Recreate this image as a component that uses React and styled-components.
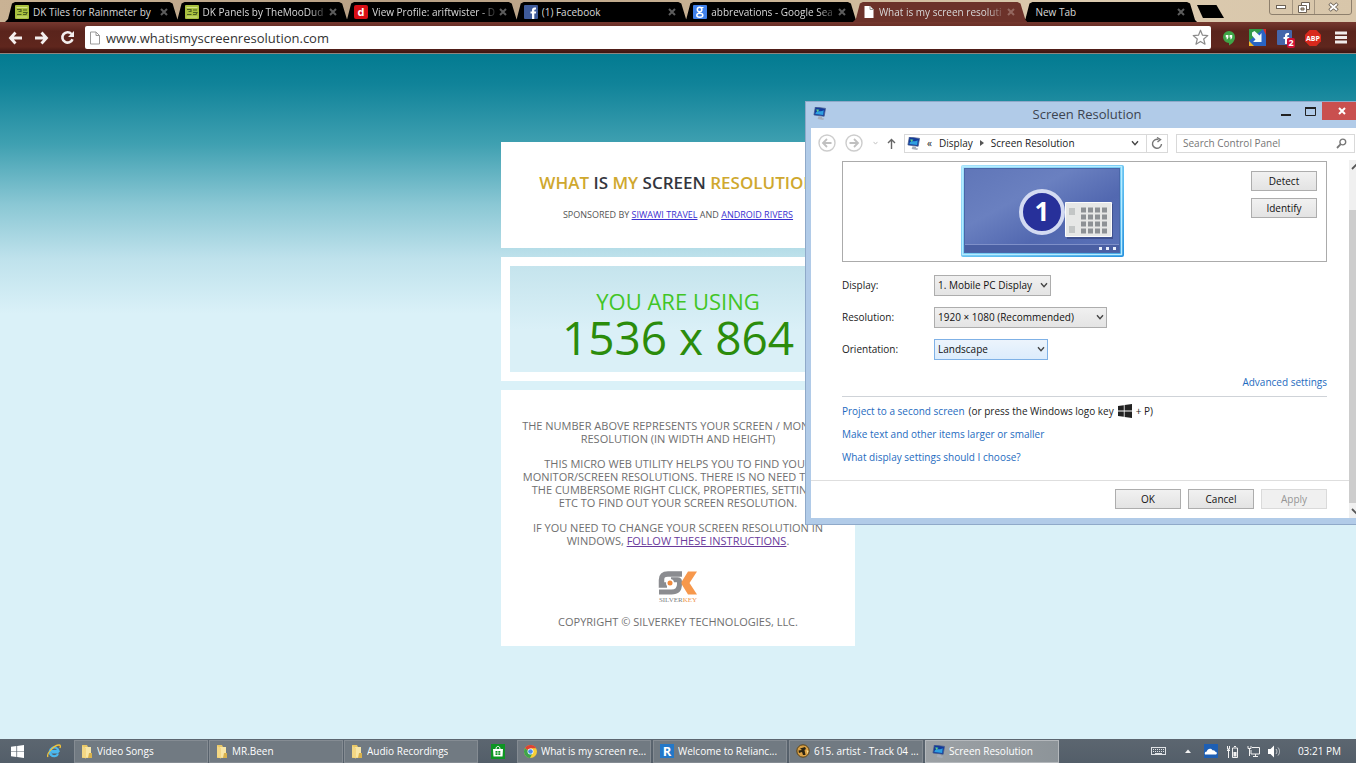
import React, { useState } from "react";
import styled, { createGlobalStyle } from "styled-components";

const uiFont = `"Open Sans", "Noto Sans", sans-serif`;
const webFont = `"Open Sans", Lato, sans-serif`;

const GlobalStyle = createGlobalStyle`
  * {
    box-sizing: border-box;
  }
  body {
    margin: 0;
    overflow: hidden;
    font-family: ${uiFont};
  }
  button, input, select {
    font-family: inherit;
    margin: 0;
  }
  svg {
    display: block;
    flex: none;
  }
`;

const Desktop = styled.div`
  position: relative;
  display: flex;
  flex-direction: column;
  height: 100vh;
  overflow: hidden;
`;

/* ---------- browser ---------- */

const TabStrip = styled.div`
  display: flex;
  height: 22px;
  padding: 2px 0 0 5px;
  background: linear-gradient(90deg, #c9b294, #b79f84 30%, #cdb798 60%, #dccbb0 80%, #d8c6aa);
`;

const TabList = styled.div`
  display: flex;
  flex: 0 1 1187px;
  min-width: 0;
`;

const Tab = styled.div`
  position: relative;
  z-index: ${({ $active }) => ($active ? 1 : 0)};
  display: flex;
  flex: 1;
  align-items: center;
  min-width: 0;
  padding: 0 4px 0 10px;

  &::before {
    content: "";
    position: absolute;
    inset: 0 -5px 0 0;
    z-index: -1;
    background: ${({ $active }) => ($active ? "#6c322a" : "#000")};
    clip-path: polygon(0 100%, 3px 85%, 7px 8%, 10px 0, calc(100% - 10px) 0, calc(100% - 7px) 8%, calc(100% - 2px) 90%, 100% 100%);
  }
`;

const TabButton = styled.button`
  display: flex;
  flex: 1;
  align-items: center;
  gap: 4px;
  min-width: 0;
  padding: 0 0 1px ${({ $plain }) => ($plain ? 3 : 0)}px;
  border: none;
  background: none;
  color: #d8d8d8;
  font-size: 10px;
  line-height: 16px;
  text-align: left;
`;

const TabText = styled.span`
  flex: 1;
  overflow: hidden;
  white-space: nowrap;
  mask-image: ${({ $fade }) => ($fade ? "linear-gradient(90deg, #000 calc(100% - 16px), rgba(0, 0, 0, 0.2))" : "none")};
`;

const CloseTab = styled.button`
  display: flex;
  width: 15px;
  padding: 0 4px;
  border: none;
  background: none;
`;

const NewTab = styled.button`
  width: 27px;
  height: 13px;
  margin: 3px 0 0 5px;
  padding: 0;
  border: none;
  background: #000;
  clip-path: polygon(0 0, 72% 0, 100% 100%, 22% 100%);
`;

const BrowserControls = styled.div`
  display: flex;
  height: 16px;
  margin: -3px 4px 0 auto;
  border: 1px solid #8d7f6c;
  border-radius: 0 0 3px 3px;
`;

const BrowserControl = styled.button`
  display: flex;
  align-items: center;
  justify-content: center;
  width: ${({ $wide }) => ($wide ? 37 : 22)}px;
  padding: 0;
  border: none;
  border-left: ${({ $first }) => ($first ? "none" : "1px solid #a39480")};
  background: none;
`;

const Toolbar = styled.div`
  display: flex;
  align-items: center;
  gap: 10px;
  height: 32px;
  padding: 0 7px;
  border-bottom: 1px solid #8f8580;
  background: linear-gradient(180deg, #75382f, #5a241c 30%, #5f261d 80%, #3c1411);
`;

const ToolButton = styled.button`
  display: flex;
  align-items: center;
  justify-content: center;
  width: 16px;
  height: 18px;
  padding: 0;
  border: none;
  background: none;
`;

const Omnibox = styled.div`
  display: flex;
  flex: 1;
  align-items: center;
  gap: 5px;
  height: 23px;
  padding: 0 3px 0 4px;
  border-radius: 2px;
  background: #fff;
`;

const UrlInput = styled.input`
  flex: 1;
  min-width: 0;
  padding: 0;
  border: none;
  outline: none;
  background: none;
  color: #333;
  font-size: 13px;
  line-height: 18px;
`;

const Extensions = styled.div`
  display: flex;
  gap: 12px;
  align-items: center;
`;

/* ---------- web page ---------- */

const Page = styled.main`
  display: flex;
  flex: 1;
  flex-direction: column;
  align-items: center;
  gap: 9px;
  min-height: 0;
  padding-top: 88px;
  background: linear-gradient(180deg, #037b91 0, #108399 30px, #3fa0b1 90px, #8ac7d4 150px, #bfe2ec 205px, #daf1f8 260px);
  font-family: ${webFont};
  text-align: center;
`;

const Card = styled.section`
  width: 26%;
  min-width: 354px;
  background: #fff;
`;

const TitleCard = styled(Card)`
  padding: 30px 0 27px;
`;

const Title = styled.h1`
  margin: 0 0 14px;
  color: #cfa82e;
  font-size: 17px;
  font-weight: 600;
  line-height: 22px;
  white-space: nowrap;

  span {
    color: #33353d;
  }
`;

const Sponsor = styled.p`
  margin: 0;
  color: #555;
  font-size: 9px;
  line-height: 13px;

  a {
    color: #3a2fd0;
  }
`;

const ResultCard = styled(Card)`
  padding: 9px;
`;

const Result = styled.div`
  padding: 22px 0 12px;
  background: linear-gradient(180deg, #c5e4ed, #daf0f7 60%);
`;

const ResultLabel = styled.div`
  color: #41c526;
  font-size: 22px;
  line-height: 27px;
`;

const ResultValue = styled.div`
  color: #2b8c0b;
  font-size: 46px;
  line-height: 45px;
`;

const InfoCard = styled(Card)`
  display: flex;
  flex-direction: column;
  align-items: center;
  gap: 12px;
  padding: 29px 0 18px;
  color: #6f6f6f;
  font-size: 11px;
  line-height: 13px;
`;

const Paragraph = styled.p`
  margin: 0;
  white-space: nowrap;

  a {
    color: #6a3a9c;
  }
`;

const LogoLink = styled.a`
  margin-top: 12px;
`;

/* ---------- screen resolution window ---------- */

const Window = styled.section`
  position: absolute;
  top: 101px;
  left: 805px;
  right: 0;
  display: flex;
  flex-direction: column;
  padding: 0 0 6px 5px;
  border: 1px solid #8fa9c9;
  border-right: none;
  background: #b1cbe8;
  color: #222;
  font-size: 10px;
`;

const TitleBar = styled.header`
  display: flex;
  align-items: flex-start;
  height: 26px;
  padding-left: 2px;
`;

const TitleIcon = styled.div`
  padding-top: 5px;
`;

const WindowTitle = styled.h2`
  flex: 1;
  margin: 0;
  padding-left: 74px;
  color: #3c4450;
  font-size: 13px;
  font-weight: 400;
  line-height: 24px;
  text-align: center;
`;

const WindowButton = styled.button`
  display: flex;
  align-items: center;
  justify-content: center;
  width: ${({ $close }) => ($close ? 34 : 24)}px;
  height: 18px;
  padding: 0;
  padding-left: ${({ $close }) => ($close ? 6 : 0)}px;
  border: none;
  background: ${({ $close }) => ($close ? "#c9504f" : "none")};
`;

const WindowBody = styled.div`
  background: #fff;
`;

const NavRow = styled.div`
  display: flex;
  align-items: center;
  height: 30px;
  margin-bottom: 2px;
  padding: 0 1px 0 6px;
`;

const NavButton = styled.button`
  display: flex;
  align-items: center;
  justify-content: center;
  width: ${({ $width }) => $width}px;
  height: 19px;
  padding: 0;
  border: none;
  background: none;
`;

const Address = styled.div`
  display: flex;
  flex: 0 0 264px;
  align-items: center;
  gap: 7px;
  height: 19px;
  margin-right: 8px;
  padding-left: 2px;
  border: 1px solid #d9d9d9;
`;

const Refresh = styled(NavButton)`
  height: 17px;
  border-left: 1px solid #d9d9d9;
`;

const AddressMenu = styled(NavButton)`
  margin-left: auto;
`;

const SearchBox = styled.label`
  display: flex;
  flex: 1;
  align-items: center;
  height: 19px;
  min-width: 0;
  padding: 0 7px 0 6px;
  border: 1px solid #d9d9d9;
`;

const SearchInput = styled.input`
  flex: 1;
  min-width: 0;
  padding: 0;
  border: none;
  outline: none;
  font-size: 10px;

  &::placeholder {
    color: #767676;
  }
`;

const ScrollArea = styled.div`
  display: flex;
`;

const Panel = styled.div`
  flex: 1;
  min-width: 0;
`;

const PanelContent = styled.div`
  padding: 1px 22px 15px 31px;
  border-bottom: 1px solid #dedede;
`;

const Preview = styled.div`
  display: flex;
  gap: 9px;
  height: 101px;
  padding: 3px 9px 3px 0;
  border: 1px solid #ababab;
`;

const Monitors = styled.div`
  display: flex;
  flex: 1;
  justify-content: center;
`;

const PreviewButtons = styled.div`
  display: flex;
  flex-direction: column;
  gap: 7px;
  padding-top: 6px;
`;

const Button = styled.button`
  width: 66px;
  height: 20px;
  padding: 0;
  border: 1px solid #adadad;
  background: linear-gradient(180deg, #f1f1f1, #e3e3e3);
  color: #111;
  font-size: 10px;
  line-height: 16px;

  &:disabled {
    border-color: #dadada;
    background: #f0f0f0;
    color: #959595;
  }
`;

const Form = styled.form`
  margin-top: 7px;
`;

const Field = styled.div`
  display: grid;
  grid-template-columns: 92px auto;
  align-items: center;
  justify-content: start;
  height: 32px;
`;

const SelectWrap = styled.div`
  display: grid;
  align-items: center;
  width: ${({ $width }) => $width}px;

  > * {
    grid-area: 1 / 1;
  }

  svg {
    justify-self: end;
    margin-right: 3px;
    pointer-events: none;
  }
`;

const Select = styled.select`
  width: 100%;
  height: 21px;
  padding: 0 12px 0 3px;
  border: 1px solid ${({ $focused }) => ($focused ? "#7fb1e6" : "#adadad")};
  border-radius: 0;
  background: ${({ $focused }) =>
    $focused ? "linear-gradient(180deg, #ecf4fc, #dcecfc)" : "linear-gradient(180deg, #f0f0f0, #e4e4e4)"};
  color: #111;
  font-size: 10px;
  appearance: none;
`;

const Advanced = styled.div`
  padding: 9px 0 6px;
  border-bottom: 1px solid #cfd3d8;
  line-height: 16px;
  text-align: right;
`;

const Link = styled.a`
  color: #1e6bc0;
  text-decoration: none;
`;

const Links = styled.div`
  display: flex;
  flex-direction: column;
  gap: 7px;
  padding-top: 6px;
  line-height: 16px;
`;

const LinkRow = styled.div`
  display: flex;
  align-items: center;
  gap: 4px;
`;

const Footer = styled.footer`
  display: flex;
  justify-content: flex-end;
  gap: 7px;
  padding: 8px 22px 9px;
`;

const ScrollBar = styled.div`
  display: flex;
  flex-direction: column;
  justify-content: space-between;
  width: 7px;
  overflow: hidden;
  background: #f0f0f0;
`;

const ScrollThumb = styled.div`
  flex: 1;
  margin: 36px 0 3px;
  background: #cdcdcd;
`;

/* ---------- taskbar ---------- */

const Taskbar = styled.footer`
  display: flex;
  align-items: center;
  height: 24px;
  background: linear-gradient(180deg, #5c6670, #535e69);
`;

const Launcher = styled.button`
  display: flex;
  align-items: center;
  justify-content: center;
  width: ${({ $width }) => $width}px;
  height: 24px;
  padding: 0;
  border: none;
  background: none;
`;

const TaskButton = styled.button`
  display: flex;
  flex: 0 1 134px;
  align-items: center;
  gap: 4px;
  min-width: 0;
  height: 23px;
  margin-right: ${({ $last }) => ($last ? 2 : 1)}px;
  padding: 0 0 0 6px;
  border: 1px solid ${({ $active }) => ($active ? "#b4b8bc" : "#858c93")};
  background: ${({ $active }) => ($active ? "linear-gradient(90deg, #9ca1a5, #8d9499)" : "#717a82")};
  color: #fff;
  font-size: 10px;
  line-height: 16px;
`;

const TaskText = styled.span`
  overflow: hidden;
  white-space: nowrap;
`;

const Tray = styled.div`
  display: flex;
  align-items: center;
  gap: 8px;
  margin-left: auto;
  padding-right: 15px;
  color: #fff;
  font-size: 10px;
`;

const TrayGroup = styled.div`
  display: flex;
  align-items: center;
  gap: 19px;
  padding-right: 5px;
`;

const Clock = styled.time`
  padding-left: 8px;
`;

/* ---------- icons ---------- */

const DeviantIcon = () => (
  <svg width="14" height="14" viewBox="0 0 14 14">
    <rect width="14" height="14" rx="1" fill="#a9c03e" />
    <path d="M2 4.500h4v2H3.500M2 9.500h4.500M8 5h4M8 7.500h4l-1 2H8" fill="none" stroke="#4d6122" strokeWidth="1.200" />
    <path d="M1.500 2.500h11M1.500 12h11" stroke="#d3e38a" />
  </svg>
);

const ProfileIcon = () => (
  <svg width="14" height="14" viewBox="0 0 14 14">
    <rect width="14" height="14" rx="2" fill="#d90f16" />
    <text x="7" y="11" textAnchor="middle" fontSize="11" fontWeight="700" fill="#fff">d</text>
  </svg>
);

const FacebookIcon = () => (
  <svg width="14" height="14" viewBox="0 0 14 14">
    <rect width="14" height="14" rx="1" fill="#3f5b9a" />
    <path d="M12 2.500H10.600c-1.700 0-2.600 1-2.600 2.600v1.400H6.500v2H8V14h2.300V8.500h1.600l.3-2h-1.900V5.300c0-.6.3-.8.9-.8H12z" fill="#fff" />
  </svg>
);

const GoogleIcon = () => (
  <svg width="14" height="14" viewBox="0 0 14 14">
    <rect width="14" height="14" rx="1" fill="#3f80ea" />
    <circle cx="6.600" cy="4.500" r="2.300" fill="none" stroke="#fff" strokeWidth="1.500" />
    <ellipse cx="6.800" cy="10.200" rx="3" ry="2" fill="none" stroke="#fff" strokeWidth="1.500" />
    <path d="M7 6.800c-1.500.7-1 1.200.5 1.800M8 2.500h2.500" fill="none" stroke="#fff" strokeWidth="1.200" />
  </svg>
);

const PageIcon = ({ color = "#fff", stroke = "none" }) => (
  <svg width="12" height="14" viewBox="0 0 12 14">
    <path d="M1.500 1h5.500l3.500 3.500V13h-9z" fill={color} stroke={stroke} />
    <path d="M7 1v3.500h3.500" fill="none" stroke="#999" />
  </svg>
);

const CrossIcon = ({ color = "#5c5c5c" }) => (
  <svg width="8" height="8" viewBox="0 0 8 8">
    <path d="M1 1l6 6M7 1L1 7" stroke={color} strokeWidth="2" />
  </svg>
);

const ArrowIcon = ({ flip }) => (
  <svg width="15" height="14" viewBox="0 0 15 14">
    <path
      d="M7.500 1.500L2.500 7l5 5.500M3 7h11"
      fill="none"
      stroke="#f4efee"
      strokeWidth="2.800"
      transform={flip ? "matrix(-1 0 0 1 15 0)" : undefined}
    />
  </svg>
);

const ReloadIcon = () => (
  <svg width="15" height="15" viewBox="0 0 15 15">
    <path d="M11.500 4A5.200 5.200 0 1 0 12.500 9.200" fill="none" stroke="#f4efee" strokeWidth="2.600" />
    <path d="M14 1v6H8z" fill="#f4efee" />
  </svg>
);

const StarIcon = () => (
  <svg width="17" height="17" viewBox="0 0 17 17">
    <path
      d="M8.500 1.200l2 5 5.300.4-4.100 3.400 1.300 5.200-4.500-2.800L4 15.200 5.300 10 1.200 6.600l5.300-.4z"
      fill="#fff"
      stroke="#8a8a8a"
      strokeWidth="1.200"
      strokeLinejoin="round"
    />
  </svg>
);

const HangoutsIcon = () => (
  <svg width="14" height="16" viewBox="0 0 14 16">
    <path d="M7 1a6 6 0 0 1 6 6c0 4-3 7-6 8.500V13A6 6 0 0 1 7 1z" fill="#3fa648" />
    <path d="M3.800 5h2.600v2.600L5.400 9.200H4.400l.6-1.700H3.800zM7.600 5h2.600v2.600L9.200 9.200H8.200l.6-1.700H7.600z" fill="#fff" />
  </svg>
);

const DownloadIcon = () => (
  <svg width="17" height="17" viewBox="0 0 17 17">
    <path d="M0 0h17v17H0z" fill="#2a64c5" />
    <path d="M0 0h14L0 12z" fill="#2f9b49" />
    <path d="M14 0h3v6z" fill="#d42e2a" />
    <path d="M0 12l5 5H0z" fill="#f2b92a" />
    <path d="M3 3.500L5.500 2l5 4.500L12.500 4v9H4l2.500-2.500L3 6.500z" fill="#f2fbfa" />
  </svg>
);

const NotifierIcon = () => (
  <svg width="20" height="20" viewBox="0 0 20 20">
    <rect x="2" y="2" width="15" height="15" rx="1" fill="#4566ab" />
    <path d="M14 5h-1.500C10.800 5 10 6 10 7.500V9H8.500v2H10v5h2.300v-5H14l.3-2h-2V7.800c0-.6.3-.8.9-.8H14z" fill="#fff" />
    <rect x="12" y="10" width="8" height="10" rx="2" fill="#cf1036" />
    <text x="16" y="18" textAnchor="middle" fontSize="9" fontWeight="700" fill="#fff">2</text>
  </svg>
);

const AdblockIcon = () => (
  <svg width="16" height="16" viewBox="0 0 16 16">
    <path d="M4.700 0h6.600L16 4.700v6.600L11.300 16H4.700L0 11.300V4.700z" fill="#d9291c" />
    <text x="8" y="11" textAnchor="middle" fontSize="7" fontWeight="700" fill="#fff">ABP</text>
  </svg>
);

const MenuIcon = () => (
  <svg width="12" height="13" viewBox="0 0 12 13">
    <path d="M0 2h12M0 6.500h12M0 11h12" stroke="#f0ebea" strokeWidth="3" />
  </svg>
);

const MonitorIcon = () => (
  <svg width="13" height="13" viewBox="0 0 14 14">
    <path d="M2.500 0l11 1.500-1.500 8.500L1 8.500z" fill="#123a9c" stroke="#4a5f8c" strokeWidth=".8" />
    <path d="M3 6c2-3 5 0 8.500-2.500L11 8.500 2.500 7.500z" fill="#2f9fe0" />
    <path d="M3.500 2.500l3.500.5-2.500 2.500z" fill="#5fd08a" />
    <path d="M6 10l3.500.4.5 1.600 2 .5-1 1.500-6-1z" fill="#a5acb8" />
  </svg>
);

const CircleArrow = ({ flip }) => (
  <svg width="18" height="18" viewBox="0 0 18 18">
    <circle cx="9" cy="9" r="8" fill="none" stroke="#cdcdcd" strokeWidth="1.400" />
    <path
      d="M9 5L5 9l4 4M5 9h8.500"
      fill="none"
      stroke="#c0c0c0"
      strokeWidth="1.800"
      transform={flip ? "matrix(-1 0 0 1 18 0)" : undefined}
    />
  </svg>
);

const ChevronIcon = ({ width = 8, color = "#444" }) => (
  <svg width={width} height="6" viewBox="0 0 9 7">
    <path d="M1 1.500l3.500 4 3.500-4" fill="none" stroke={color} strokeWidth="1.600" />
  </svg>
);

const UpIcon = () => (
  <svg width="9" height="11" viewBox="0 0 9 11">
    <path d="M4.500 11V1.500M1 5l3.500-3.500L8 5" fill="none" stroke="#666" strokeWidth="1.400" />
  </svg>
);

const RefreshIcon = () => (
  <svg width="12" height="13" viewBox="0 0 12 13">
    <path d="M7.500 2.500A4.500 4.500 0 1 0 10.500 7" fill="none" stroke="#777" strokeWidth="1.400" />
    <path d="M6 .5l3.500 2L6.500 5" fill="none" stroke="#777" strokeWidth="1.400" />
  </svg>
);

const SearchIcon = () => (
  <svg width="11" height="11" viewBox="0 0 11 11">
    <circle cx="6.800" cy="4" r="2.900" fill="none" stroke="#777" strokeWidth="1.400" />
    <path d="M4.700 6.200L1 10" stroke="#777" strokeWidth="1.800" />
  </svg>
);

const WindowsIcon = ({ size = 13, color = "#fff" }) => (
  <svg width={size} height={size} viewBox="0 0 14 14">
    <path d="M0 2l5.800-.8v5.400H0zM6.600 1.100L14 0v6.600H6.600zM0 7.400h5.800v5.400L0 12zM6.600 7.400H14V14l-7.400-1.100z" fill={color} />
  </svg>
);

const DisplayPreview = () => (
  <svg width="163" height="92" viewBox="0 0 163 92" role="img" aria-label="Display 1">
    <defs>
      <linearGradient id="screen" x1="0" y1="0" x2="1" y2="1">
        <stop offset="0" stopColor="#6076b8" />
        <stop offset=".35" stopColor="#6a80c0" />
        <stop offset=".65" stopColor="#5268b0" />
        <stop offset="1" stopColor="#5a72b8" />
      </linearGradient>
      <linearGradient id="frame" x1="0" y1="0" x2="1" y2="1">
        <stop offset="0" stopColor="#9fdefa" />
        <stop offset=".6" stopColor="#5dbdf0" />
        <stop offset="1" stopColor="#2591de" />
      </linearGradient>
    </defs>
    <rect width="163" height="92" rx="2" fill="url(#frame)" />
    <rect x="1.500" y="1.500" width="159" height="88" fill="none" stroke="#b5ecff" strokeWidth="1.500" />
    <rect x="3.500" y="3.500" width="155" height="84" fill="url(#screen)" stroke="#4a66a8" />
    <path d="M4 80h154v7H4z" fill="#4a5fa3" />
    <path d="M4 79.500h154" stroke="#7f90c9" />
    <path d="M138 82h3v3h-3zM145 82h3v3h-3zM152 82h3v3h-3z" fill="#e7edfa" />
    <circle cx="81" cy="47" r="21" fill="#27309a" stroke="#d3daf2" strokeWidth="4" />
    <text x="81" y="56" textAnchor="middle" fontSize="26" fontWeight="700" fill="#fff">1</text>
    <path d="M106 39h46v35h-46z" fill="#3f5190" />
    <path d="M104.500 37.500h46v34h-46z" fill="#e6e7e6" stroke="#fbfbfb" />
    <path d="M108 43h6v7h-6zM108 61h6v7h-6z" fill="#c3c6c6" />
    <path
      d="M120 45h26M120 52h26M120 59h26M120 66h26"
      stroke="#8d9195"
      strokeWidth="5"
      strokeDasharray="5 2"
    />
  </svg>
);

const SilverKeyLogo = () => (
  <svg width="40" height="32" viewBox="0 0 40 32">
    <path d="M24 3H10C5 3 3.500 5 3.500 9v5H9" fill="none" stroke="#8b8c90" strokeWidth="5.500" />
    <path d="M13 8.800h6.500c1.500 0 2 .7 2 2V13c0 5-2.500 8-8 8H1" fill="none" stroke="#8b8c90" strokeWidth="5" />
    <circle cx="12" cy="12" r="4" fill="#fff" />
    <circle cx="12" cy="12" r="2.500" fill="#f08a3c" />
    <path d="M30 .5h9L31.500 12 39 23.500h-9L23.500 13v-2z" fill="#f7984c" />
    <text x="20" y="31" textAnchor="middle" fontFamily="Liberation Serif, serif" fontSize="7" fill="#7d7e82">
      SILVER<tspan fill="#f0964c">KEY</tspan>
    </text>
  </svg>
);

const FolderIcon = () => (
  <svg width="12" height="15" viewBox="0 0 12 15">
    <path d="M1 1h5l1 2v11H1z" fill="#e9c765" />
    <path d="M4 3h6v11l-6-.5z" fill="#f8e6a6" />
    <path d="M1 2l4 2v10.500L1 13z" fill="#f3d784" />
    <path d="M8 9h3v5H7z" fill="#d9b24d" />
  </svg>
);

const IeIcon = () => (
  <svg width="14" height="14" viewBox="0 0 14 14">
    <path d="M11.800 8.500H4.200M4 7h7.500A4.400 4.400 0 1 0 11 10" fill="none" stroke="#4bb8ee" strokeWidth="2.200" />
    <path d="M1 13C-1 10 7 1 12 1c2 0 1.500 2 .8 3" fill="none" stroke="#f2c53b" strokeWidth="1.300" />
  </svg>
);

const StoreIcon = () => (
  <svg width="14" height="15" viewBox="0 0 14 15">
    <rect width="14" height="15" fill="#0d9423" />
    <path d="M2 5h10l-.5 7.500h-9z" fill="#fff" />
    <path d="M5 5c0-3.500 4-3.500 4 0" fill="none" stroke="#fff" />
    <path d="M4.500 7h2v1.700h-2zM7.300 7h2v1.700h-2zM4.500 9.300h2V11h-2zM7.300 9.300h2V11h-2z" fill="#0d9423" />
  </svg>
);

const ChromeIcon = () => (
  <svg width="13" height="13" viewBox="0 0 14 14">
    <circle cx="7" cy="7" r="7" fill="#f7ce36" />
    <path d="M7 7L1 3.400A7 7 0 0 1 13.100 3.500H7z" fill="#de4234" />
    <path d="M1 3.400A7 7 0 0 0 6.500 14L9 9z" fill="#3ea34d" />
    <circle cx="7" cy="7" r="3.200" fill="#fff" />
    <circle cx="7" cy="7" r="2.500" fill="#4a8af0" />
  </svg>
);

const RelianceIcon = () => (
  <svg width="14" height="14" viewBox="0 0 14 14">
    <rect width="14" height="14" fill="#2378c8" />
    <text x="7" y="12" textAnchor="middle" fontSize="13" fontWeight="700" fill="#fff">R</text>
  </svg>
);

const MusicIcon = () => (
  <svg width="14" height="14" viewBox="0 0 14 14">
    <circle cx="7" cy="7" r="6.500" fill="#d9a044" />
    <path d="M4 4.500l5-1.500 1 2-1.500 1 1 5H7L6 8 3 9l-.5-2.500L6 6z" fill="#2b2412" />
    <circle cx="7" cy="7" r="6.200" fill="none" stroke="#2b2412" strokeWidth=".8" />
    <path d="M10.500 6l2 1-1 3z" fill="#f6dc95" />
  </svg>
);

const KeyboardIcon = () => (
  <svg width="15" height="8" viewBox="0 0 15 8">
    <rect x=".5" y=".5" width="14" height="7" fill="none" stroke="#dfe2e5" />
    <path d="M2 2.500h11M2 4.500h11" stroke="#dfe2e5" strokeDasharray="1 1" />
    <path d="M4 6.500h7" stroke="#dfe2e5" />
  </svg>
);

const TriangleIcon = () => (
  <svg width="6" height="4" viewBox="0 0 6 4">
    <path d="M0 4l3-3.500L6 4z" fill="#f2f2f2" />
  </svg>
);

const CloudIcon = () => (
  <svg width="14" height="14" viewBox="0 0 14 14">
    <rect width="14" height="14" fill="#1e5fb4" />
    <path d="M1 10.500c-.8-2 .5-3 1.800-3C3.500 4.500 7 4 8.500 6.300c1.800-.5 2.500.7 2.700 1.500 1.800 0 2.300 2.200.8 2.700z" fill="#fff" />
  </svg>
);

const BatteryIcon = () => (
  <svg width="13" height="13" viewBox="0 0 13 13">
    <path d="M6.500 3h5v9.500h-5zM8 1.500h2" fill="none" stroke="#f2f2f2" />
    <path d="M7.500 7h3v4.500h-3z" fill="#f2f2f2" />
    <path d="M2.500 13V4M1 4h3M1.500 1v3M3.500 1v3M1 5.500h3" stroke="#f2f2f2" />
  </svg>
);

const NetworkIcon = () => (
  <svg width="13" height="13" viewBox="0 0 13 13">
    <path d="M5 2.500h7.500v6.500H4V5M6 11.500h5M8.500 9v2.500" fill="none" stroke="#f2f2f2" />
    <path d="M1 1v2.500h3V1M2.500 3.500V11" fill="none" stroke="#f2f2f2" />
  </svg>
);

const SpeakerIcon = () => (
  <svg width="14" height="13" viewBox="0 0 14 13">
    <path d="M0 4h2.500L6 .5v12L2.500 9H0z" fill="#fff" />
    <path d="M8 4c1.200 1.500 1.200 3.500 0 5M10 2.500c2 2.300 2 5.700 0 8" fill="none" stroke="#d5d8db" strokeWidth=".9" />
  </svg>
);

/* ---------- data ---------- */

const tabs = [
  { title: "DK Tiles for Rainmeter by", icon: <DeviantIcon /> },
  { title: "DK Panels by TheMooDud", icon: <DeviantIcon />, fade: true },
  { title: "View Profile: ariftwister - D", icon: <ProfileIcon />, fade: true },
  { title: "(1) Facebook", icon: <FacebookIcon /> },
  { title: "abbrevations - Google Sea", icon: <GoogleIcon />, fade: true },
  { title: "What is my screen resoluti", icon: <PageIcon />, active: true, fade: true },
  { title: "New Tab" },
];

const folders = ["Video Songs", "MR.Been", "Audio Recordings"];

const programs = [
  { title: "What is my screen re...", icon: <ChromeIcon /> },
  { title: "Welcome to Relianc...", icon: <RelianceIcon /> },
  { title: "615. artist - Track 04 ...", icon: <MusicIcon /> },
  { title: "Screen Resolution", icon: <MonitorIcon />, active: true },
];

const fields = [
  { id: "display", label: "Display:", width: 117, options: ["1. Mobile PC Display"] },
  { id: "resolution", label: "Resolution:", width: 173, options: ["1920 × 1080 (Recommended)", "1600 × 900"] },
  { id: "orientation", label: "Orientation:", width: 114, options: ["Landscape", "Portrait"], focused: true },
];

const Browser = () => {
  const [url, setUrl] = useState("www.whatismyscreenresolution.com");

  return (
    <>
      <TabStrip>
        <TabList>
          {tabs.map((tab) => (
            <Tab key={tab.title} $active={tab.active}>
              <TabButton $plain={!tab.icon}>
                {tab.icon}
                <TabText $fade={tab.fade}>{tab.title}</TabText>
              </TabButton>
              <CloseTab aria-label="Close tab">
                <CrossIcon color={tab.active ? "#94675f" : undefined} />
              </CloseTab>
            </Tab>
          ))}
        </TabList>
        <NewTab aria-label="New tab" />
        <BrowserControls>
          <BrowserControl $first aria-label="Minimize">
            <svg width="10" height="4" viewBox="0 0 10 4">
              <rect x=".5" y=".5" width="9" height="3" fill="#fff" stroke="#6d6255" />
            </svg>
          </BrowserControl>
          <BrowserControl aria-label="Restore">
            <svg width="12" height="11" viewBox="0 0 12 11">
              <path d="M3.500.5h8v7h-8z" fill="#fff" stroke="#6d6255" />
              <path d="M.5 3.500h8v7h-8z" fill="#fff" stroke="#6d6255" />
              <path d="M3 6h3v2H3z" fill="#cdb798" stroke="#6d6255" />
            </svg>
          </BrowserControl>
          <BrowserControl $wide aria-label="Close">
            <svg width="11" height="10" viewBox="0 0 11 10">
              <path d="M1.500 1.500l8 7M9.500 1.500l-8 7" stroke="#6d6255" strokeWidth="3.600" />
              <path d="M2 2l7 6M9 2L2 8" stroke="#fff" strokeWidth="1.800" />
            </svg>
          </BrowserControl>
        </BrowserControls>
      </TabStrip>
      <Toolbar>
        <ToolButton aria-label="Back">
          <ArrowIcon />
        </ToolButton>
        <ToolButton aria-label="Forward">
          <ArrowIcon flip />
        </ToolButton>
        <ToolButton aria-label="Reload">
          <ReloadIcon />
        </ToolButton>
        <Omnibox>
          <PageIcon stroke="#999" />
          <UrlInput aria-label="Address" value={url} onChange={(e) => setUrl(e.target.value)} />
          <ToolButton aria-label="Bookmark">
            <StarIcon />
          </ToolButton>
        </Omnibox>
        <Extensions>
          <ToolButton aria-label="Hangouts">
            <HangoutsIcon />
          </ToolButton>
          <ToolButton aria-label="Downloads">
            <DownloadIcon />
          </ToolButton>
          <ToolButton aria-label="Facebook notifications">
            <NotifierIcon />
          </ToolButton>
          <ToolButton aria-label="Adblock Plus">
            <AdblockIcon />
          </ToolButton>
          <ToolButton aria-label="Menu">
            <MenuIcon />
          </ToolButton>
        </Extensions>
      </Toolbar>
    </>
  );
};

const WebPage = () => (
  <Page>
    <TitleCard>
      <Title>
        WHAT <span>IS</span> MY <span>SCREEN</span> RESOLUTION
      </Title>
      <Sponsor>
        SPONSORED BY <a href="#siwawi">SIWAWI TRAVEL</a> AND <a href="#android">ANDROID RIVERS</a>
      </Sponsor>
    </TitleCard>
    <ResultCard>
      <Result>
        <ResultLabel>YOU ARE USING</ResultLabel>
        <ResultValue>1536 x 864</ResultValue>
      </Result>
    </ResultCard>
    <InfoCard>
      <Paragraph>
        THE NUMBER ABOVE REPRESENTS YOUR SCREEN / MONITOR
        <br />
        RESOLUTION (IN WIDTH AND HEIGHT)
      </Paragraph>
      <Paragraph>
        THIS MICRO WEB UTILITY HELPS YOU TO FIND YOUR
        <br />
        MONITOR/SCREEN RESOLUTIONS. THERE IS NO NEED TO DO
        <br />
        THE CUMBERSOME RIGHT CLICK, PROPERTIES, SETTINGS,
        <br />
        ETC TO FIND OUT YOUR SCREEN RESOLUTION.
      </Paragraph>
      <Paragraph>
        IF YOU NEED TO CHANGE YOUR SCREEN RESOLUTION IN
        <br />
        WINDOWS, <a href="#instructions">FOLLOW THESE INSTRUCTIONS</a>.
      </Paragraph>
      <LogoLink href="#silverkey" aria-label="SilverKey">
        <SilverKeyLogo />
      </LogoLink>
      <Paragraph>COPYRIGHT © SILVERKEY TECHNOLOGIES, LLC.</Paragraph>
    </InfoCard>
  </Page>
);

const ScreenResolution = () => (
  <Window>
    <TitleBar>
      <TitleIcon>
        <MonitorIcon />
      </TitleIcon>
      <WindowTitle>Screen Resolution</WindowTitle>
      <WindowButton aria-label="Minimize">
        <svg width="10" height="9" viewBox="0 0 10 9">
          <path d="M0 8h10" stroke="#222" strokeWidth="2" />
        </svg>
      </WindowButton>
      <WindowButton aria-label="Maximize">
        <svg width="11" height="9" viewBox="0 0 11 9">
          <path d="M.5 1.500h10v7H.5z" fill="none" stroke="#222" />
          <path d="M0 1h11" stroke="#222" strokeWidth="2" />
        </svg>
      </WindowButton>
      <WindowButton $close aria-label="Close">
        <CrossIcon color="#fff" />
      </WindowButton>
    </TitleBar>
    <WindowBody>
      <NavRow>
        <NavButton $width={19} aria-label="Back">
          <CircleArrow />
        </NavButton>
        <NavButton $width={36} aria-label="Forward">
          <CircleArrow flip />
        </NavButton>
        <NavButton $width={6} aria-label="Recent">
          <ChevronIcon width={5} color="#bbb" />
        </NavButton>
        <NavButton $width={26} aria-label="Up">
          <UpIcon />
        </NavButton>
        <Address>
          <MonitorIcon />
          <span>«</span>
          <span>Display</span>
          <svg width="4" height="6" viewBox="0 0 4 6">
            <path d="M0 0l4 3-4 3z" fill="#555" />
          </svg>
          <span>Screen Resolution</span>
          <AddressMenu $width={8} aria-label="Previous locations">
            <ChevronIcon />
          </AddressMenu>
          <Refresh $width={21} aria-label="Refresh">
            <RefreshIcon />
          </Refresh>
        </Address>
        <SearchBox>
          <SearchInput aria-label="Search Control Panel" placeholder="Search Control Panel" />
          <SearchIcon />
        </SearchBox>
      </NavRow>
      <ScrollArea>
        <Panel>
          <PanelContent>
            <Preview>
              <Monitors>
                <DisplayPreview />
              </Monitors>
              <PreviewButtons>
                <Button>Detect</Button>
                <Button>Identify</Button>
              </PreviewButtons>
            </Preview>
            <Form>
              {fields.map(({ id, label, width, options, focused }) => (
                <Field key={id}>
                  <label htmlFor={id}>{label}</label>
                  <SelectWrap $width={width}>
                    <Select id={id} $focused={focused}>
                      {options.map((option) => (
                        <option key={option}>{option}</option>
                      ))}
                    </Select>
                    <ChevronIcon />
                  </SelectWrap>
                </Field>
              ))}
            </Form>
            <Advanced>
              <Link href="#advanced">Advanced settings</Link>
            </Advanced>
            <Links>
              <LinkRow>
                <Link href="#project">Project to a second screen</Link>
                <span>(or press the Windows logo key</span>
                <WindowsIcon size={14} color="#222" />
                <span>+ P)</span>
              </LinkRow>
              <Link href="#text-size">Make text and other items larger or smaller</Link>
              <Link href="#help">What display settings should I choose?</Link>
            </Links>
          </PanelContent>
          <Footer>
            <Button>OK</Button>
            <Button>Cancel</Button>
            <Button disabled>Apply</Button>
          </Footer>
        </Panel>
        <ScrollBar>
          <svg width="12" height="14" viewBox="0 0 12 14">
            <path d="M3 9l4-4 4 4" fill="none" stroke="#555" strokeWidth="1.800" />
          </svg>
          <ScrollThumb />
          <svg width="12" height="12" viewBox="0 0 12 12">
            <path d="M3 3l4 4 4-4" fill="none" stroke="#555" strokeWidth="1.800" />
          </svg>
        </ScrollBar>
      </ScrollArea>
    </WindowBody>
  </Window>
);

const TaskBar = () => (
  <Taskbar>
    <Launcher $width={34} aria-label="Start">
      <WindowsIcon />
    </Launcher>
    <Launcher $width={40} aria-label="Internet Explorer">
      <IeIcon />
    </Launcher>
    {folders.map((name) => (
      <TaskButton key={name}>
        <FolderIcon />
        <TaskText>{name}</TaskText>
      </TaskButton>
    ))}
    <Launcher $width={38} aria-label="Store">
      <StoreIcon />
    </Launcher>
    {programs.map(({ title, icon, active }) => (
      <TaskButton key={title} $active={active} $last>
        {icon}
        <TaskText>{title}</TaskText>
      </TaskButton>
    ))}
    <Tray>
      <TrayGroup>
        <KeyboardIcon />
        <TriangleIcon />
      </TrayGroup>
      <CloudIcon />
      <BatteryIcon />
      <NetworkIcon />
      <SpeakerIcon />
      <Clock>03:21 PM</Clock>
    </Tray>
  </Taskbar>
);

const App = () => (
  <Desktop>
    <GlobalStyle />
    <Browser />
    <WebPage />
    <ScreenResolution />
    <TaskBar />
  </Desktop>
);

export default App;
